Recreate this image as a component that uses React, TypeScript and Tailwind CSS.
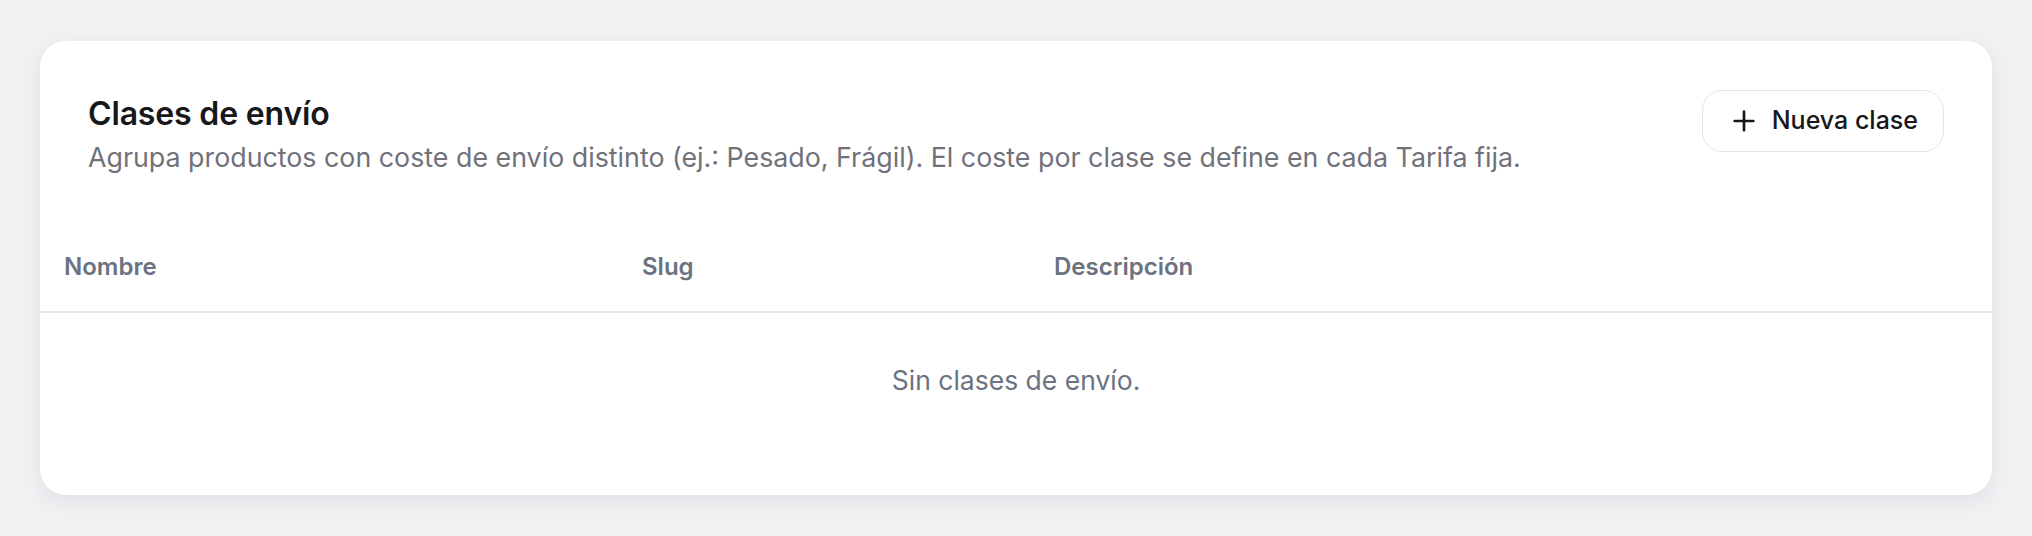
import { Plus } from "lucide-react";

const columns = [
  { key: "name", label: "Nombre", width: "w-[578px]" },
  { key: "slug", label: "Slug", width: "w-[412px]" },
  { key: "description", label: "Descripción", width: "" },
];

export default function App() {
  const classes: { id: string; name: string; slug: string; description: string }[] = [];

  return (
    <div
      className="min-h-screen bg-[#f0f1f3] px-10 pt-[41px] pb-10"
      style={{ fontFamily: "Inter, 'Noto Sans', sans-serif" }}
    >
      <section className="bg-white rounded-[26px] shadow-[0_6px_20px_rgba(15,23,42,0.07)] overflow-hidden">
        {/* Header */}
        <div className="flex items-start justify-between pt-[49px] px-12 pb-[47px]">
          <div className="mt-1">
            <h2 className="text-[32px] leading-[40px] font-semibold text-[#18181b] tracking-[-0.005em]">
              Clases de envío
            </h2>
            <p className="mt-[5px] text-[26.8px] leading-[36px] text-[#71717a]">
              Agrupa productos con coste de envío distinto (ej.: Pesado, Frágil). El coste por clase se
              define en cada Tarifa fija.
            </p>
          </div>
          <button className="flex items-center gap-3 h-[62px] px-[25px] border border-[#e4e4e7] rounded-[20px] bg-white text-[25px] font-medium text-[#18181b] shrink-0">
            <Plus size={32} strokeWidth={2} />
            Nueva clase
          </button>
        </div>

        {/* Table */}
        <table className="w-full border-collapse">
          <thead>
            <tr className="border-b-2 border-[#e5e7eb]">
              {columns.map((col) => (
                <th
                  key={col.key}
                  className={`${col.width} h-[90px] pl-6 text-left text-[24px] font-semibold text-[#6b7280]`}
                >
                  {col.label}
                </th>
              ))}
            </tr>
          </thead>
          <tbody>
            {classes.length === 0 ? (
              <tr>
                <td
                  colSpan={3}
                  className="pt-[49px] pb-[97px] text-center text-[26.5px] leading-[36px] text-[#6b7280]"
                >
                  Sin clases de envío.
                </td>
              </tr>
            ) : (
              classes.map((c) => (
                <tr key={c.id}>
                  <td className="pl-6">{c.name}</td>
                  <td className="pl-6">{c.slug}</td>
                  <td className="pl-6">{c.description}</td>
                </tr>
              ))
            )}
          </tbody>
        </table>
      </section>
    </div>
  );
}
